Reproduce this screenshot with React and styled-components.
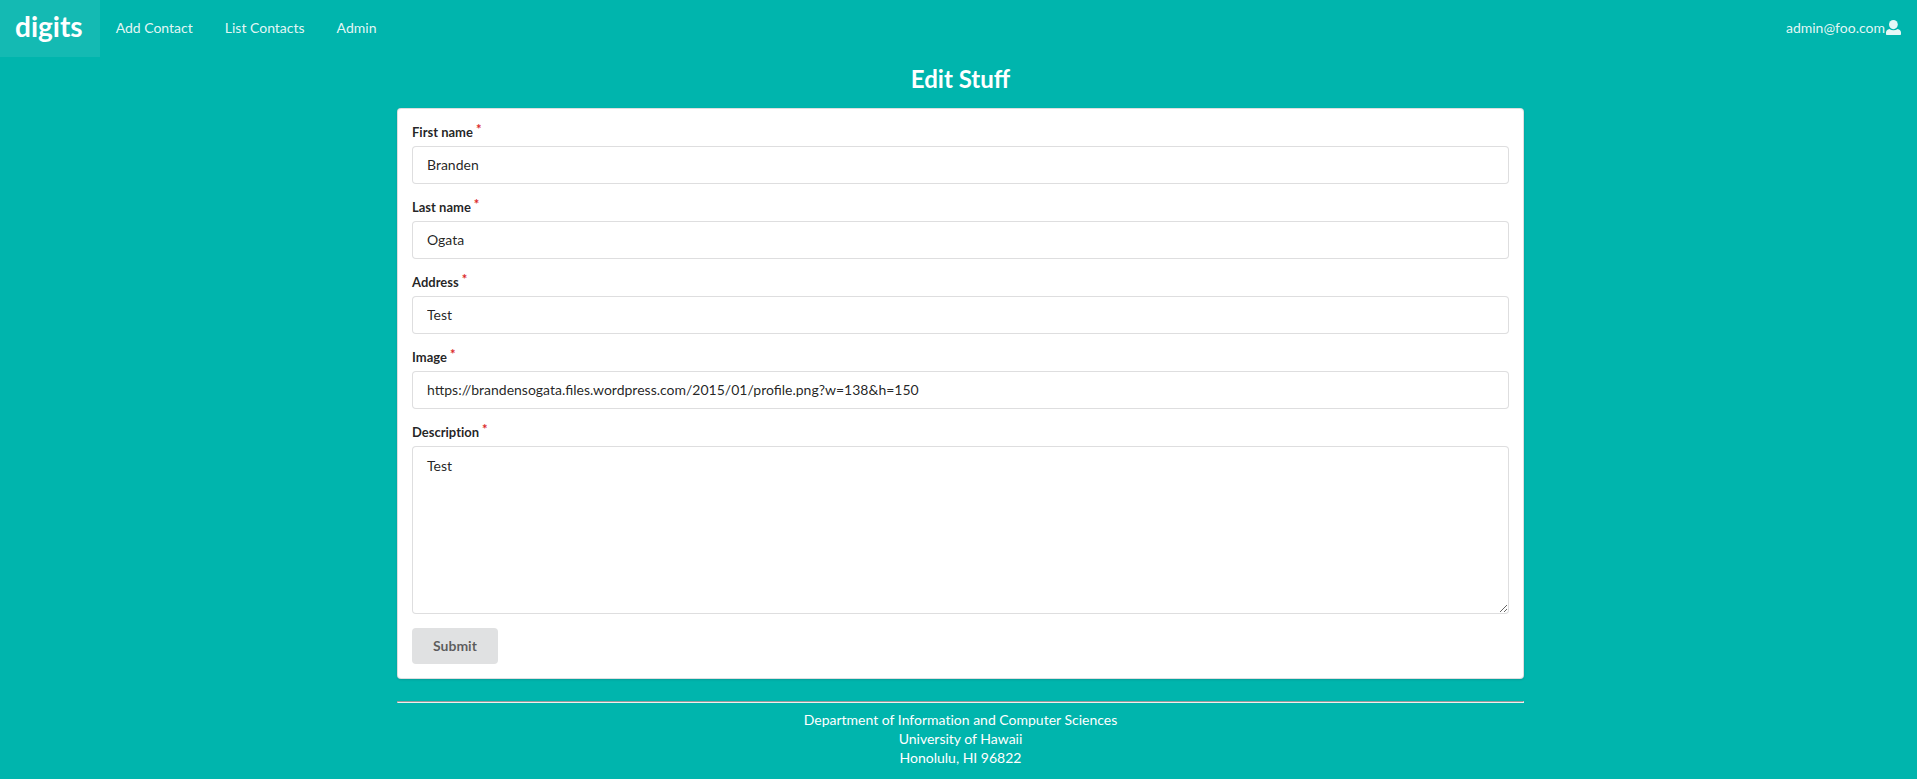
import React from 'react';
import styled, { createGlobalStyle } from 'styled-components';

const Global = createGlobalStyle`
  *, *::before, *::after { box-sizing: border-box; }
  body {
    margin: 0;
    background: #00b5ad;
    font-family: Lato, 'Helvetica Neue', Arial, sans-serif;
    font-size: 14px;
    line-height: 18px;
    font-variant-ligatures: none;
    color: rgba(0, 0, 0, 0.87);
  }
`;

const Menu = styled.nav`
  display: flex;
  align-items: stretch;
  min-height: 40px;
  margin-bottom: 7px;
`;

const MenuItem = styled.a`
  display: flex;
  align-items: center;
  padding: ${(p) => (p.$active ? '0 16px 0 15px' : '0 16px 2px')};
  color: rgba(255, 255, 255, 0.9);
  line-height: 14px;
  text-decoration: none;
  background: ${(p) => (p.$active ? 'rgba(255, 255, 255, 0.08)' : 'transparent')};
  margin-left: ${(p) => (p.$right ? 'auto' : '0')};
`;

const Brand = styled.h1`
  margin: 0;
  padding: 8px 1px 13px 0;
  color: #fff;
  font-size: 28px;
  line-height: 36px;
  font-weight: 700;
`;

const UserIcon = styled.svg`
  width: 16px;
  height: 15px;
  fill: currentColor;
`;

const Content = styled.div`
  padding: 0 14px 0 18px;
`;

const Container = styled.main`
  max-width: 1127px;
  margin: 0 auto;
`;

const Title = styled.h2`
  margin: 0 0 14px;
  color: #fff;
  font-size: 24px;
  line-height: 30px;
  font-weight: 700;
  font-variant-ligatures: normal;
  text-align: center;
`;

const Segment = styled.form`
  padding: 14px;
  background: #fff;
  border: 1px solid rgba(34, 36, 38, 0.15);
  border-radius: 4px;
  box-shadow: 0 1px 2px 0 rgba(34, 36, 38, 0.15);
`;

const Field = styled.div`
  margin-bottom: 14px;
`;

const Label = styled.label`
  display: block;
  margin-bottom: 4px;
  font-size: 13px;
  line-height: 19px;
  font-weight: 700;

  &::after {
    content: '*';
    margin-left: 3px;
    color: #db2828;
    line-height: 12px;
    vertical-align: top;
  }
`;

const Input = styled.input`
  display: block;
  width: 100%;
  height: 38px;
  padding: 9px 14px 11px;
  border: 1px solid rgba(34, 36, 38, 0.15);
  border-radius: 4px;
  background: #fff;
  color: rgba(0, 0, 0, 0.87);
  font: inherit;
  font-variant-ligatures: normal;
  line-height: 16px;
  outline: none;
`;

const TextArea = styled.textarea`
  display: block;
  width: 100%;
  height: 168px;
  padding: 10px 14px;
  border: 1px solid rgba(34, 36, 38, 0.15);
  border-radius: 4px;
  background: #fff;
  color: rgba(0, 0, 0, 0.87);
  font: inherit;
  resize: vertical;
  outline: none;
`;

const Submit = styled.button`
  display: block;
  height: 36px;
  padding: 0 21px;
  border: 0;
  border-radius: 4px;
  background: #e0e1e2;
  color: rgba(0, 0, 0, 0.6);
  font: inherit;
  font-weight: 700;
`;

const Footer = styled.footer`
  max-width: 1127px;
  margin: 22px auto 0;
  color: #fff;
  line-height: 19px;
  text-align: center;
`;

const Rule = styled.hr`
  margin: 0 0 7px;
  border: 1px solid;
  border-color: #9a9a9a #eee #eee #9a9a9a;
`;

const fields = [
  { id: 'firstName', label: 'First name', value: 'Branden' },
  { id: 'lastName', label: 'Last name', value: 'Ogata' },
  { id: 'address', label: 'Address', value: 'Test' },
  {
    id: 'image',
    label: 'Image',
    value: 'https://brandensogata.files.wordpress.com/2015/01/profile.png?w=138&h=150',
  },
];

export default function App() {
  return (
    <>
      <Global />
      <Menu>
        <MenuItem href="#" $active>
          <Brand>digits</Brand>
        </MenuItem>
        <MenuItem href="#add">Add Contact</MenuItem>
        <MenuItem href="#list">List Contacts</MenuItem>
        <MenuItem href="#admin">Admin</MenuItem>
        <MenuItem href="#account" $right>
          admin@foo.com
          <UserIcon viewBox="0 0 16 15" aria-hidden="true">
            <ellipse cx="8.400" cy="4.600" rx="4.400" ry="4.600" />
            <path d="M4.400 9C2.400 9.300 1 10.600 1 12.600v1.400c0 .6.400 1 1 1h13c.6 0 1-.4 1-1v-1.400c0-2-1.400-3.300-3.400-3.600-1.200.8-2.600 1.200-4.100 1.200S5.600 9.800 4.400 9z" />
          </UserIcon>
        </MenuItem>
      </Menu>
      <Content>
        <Container>
          <Title>Edit Stuff</Title>
          <Segment onSubmit={(e) => e.preventDefault()}>
            {fields.map((f) => (
              <Field key={f.id}>
                <Label htmlFor={f.id}>{f.label}</Label>
                <Input id={f.id} type="text" defaultValue={f.value} />
              </Field>
            ))}
            <Field>
              <Label htmlFor="description">Description</Label>
              <TextArea id="description" defaultValue="Test" />
            </Field>
            <Submit type="submit">Submit</Submit>
          </Segment>
        </Container>
        <Footer>
          <Rule />
          <div>Department of Information and Computer Sciences</div>
          <div>University of Hawaii</div>
          <div>Honolulu, HI 96822</div>
        </Footer>
      </Content>
    </>
  );
}
